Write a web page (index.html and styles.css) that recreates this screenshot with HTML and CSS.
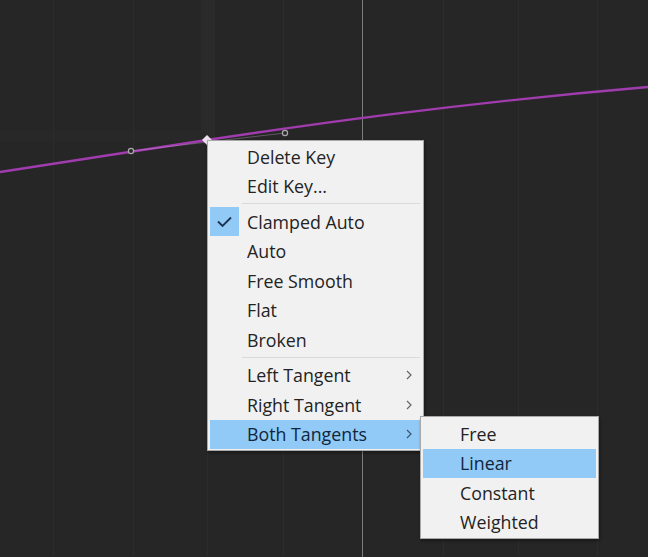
FILE: index.html
```html
<!DOCTYPE html>
<html>
<head>
<meta charset="utf-8">
<link rel="stylesheet" href="styles.css">
</head>
<body>
<div class="canvas">
  <svg class="graph" width="648" height="557" viewBox="0 0 648 557">
    <rect x="201" y="0" width="14" height="140" fill="#2a2a2a"/>
    <rect x="0" y="131" width="207" height="10" fill="#282828"/>
    <g stroke="#2c2c2c" stroke-width="1">
      <line x1="53.5" y1="0" x2="53.5" y2="557"/>
      <line x1="133.5" y1="0" x2="133.5" y2="557"/>
      <line x1="207.5" y1="0" x2="207.5" y2="557"/>
      <line x1="283.5" y1="0" x2="283.5" y2="557"/>
      <line x1="443.5" y1="0" x2="443.5" y2="557"/>
      <line x1="518.5" y1="0" x2="518.5" y2="557"/>
      <line x1="597.5" y1="0" x2="597.5" y2="557"/>
    </g>
    <line x1="362.5" y1="0" x2="362.5" y2="557" stroke="#7c7c7c" stroke-width="1"/>
    <path d="M0 172 L207 140 C 300 126, 450 104, 648 87" fill="none" stroke="#a03cae" stroke-width="2.3"/>
    <line x1="131" y1="151" x2="285" y2="133" stroke="#d0b0d6" stroke-width="1" opacity="0.35"/>
    <circle cx="131" cy="151" r="2.6" fill="#2a2a2a" stroke="#a9a9a9" stroke-width="1.2"/>
    <circle cx="285" cy="133" r="2.6" fill="#2a2a2a" stroke="#a9a9a9" stroke-width="1.2"/>
    <path d="M207 135 L212 140 L207 145 L202 140 Z" fill="#ece0ed"/>
  </svg>

  <div class="menu main-menu">
    <div class="item"><span class="icon"></span><span class="label">Delete Key</span><span class="arrow"></span></div>
    <div class="item"><span class="icon"></span><span class="label">Edit Key...</span><span class="arrow"></span></div>
    <div class="sep"></div>
    <div class="item"><span class="icon checked"><svg width="29" height="29" viewBox="0 0 29 29"><path d="M8 14.5 L12.5 19 L21 10.5" fill="none" stroke="#1b3550" stroke-width="1.9"/></svg></span><span class="label">Clamped Auto</span><span class="arrow"></span></div>
    <div class="item"><span class="icon"></span><span class="label">Auto</span><span class="arrow"></span></div>
    <div class="item"><span class="icon"></span><span class="label">Free Smooth</span><span class="arrow"></span></div>
    <div class="item"><span class="icon"></span><span class="label">Flat</span><span class="arrow"></span></div>
    <div class="item"><span class="icon"></span><span class="label">Broken</span><span class="arrow"></span></div>
    <div class="sep"></div>
    <div class="item"><span class="icon"></span><span class="label">Left Tangent</span><span class="arrow"><svg width="6" height="10" viewBox="0 0 6 10"><path d="M1 1 L5 5 L1 9" fill="none" stroke="#666666" stroke-width="1.2"/></svg></span></div>
    <div class="item"><span class="icon"></span><span class="label">Right Tangent</span><span class="arrow"><svg width="6" height="10" viewBox="0 0 6 10"><path d="M1 1 L5 5 L1 9" fill="none" stroke="#666666" stroke-width="1.2"/></svg></span></div>
    <div class="item active"><span class="icon"></span><span class="label">Both Tangents</span><span class="arrow"><svg width="6" height="10" viewBox="0 0 6 10"><path d="M1 1 L5 5 L1 9" fill="none" stroke="#3a5672" stroke-width="1.2"/></svg></span></div>
  </div>

  <div class="menu sub-menu">
    <div class="item"><span class="icon"></span><span class="label">Free</span></div>
    <div class="item active"><span class="icon"></span><span class="label">Linear</span></div>
    <div class="item"><span class="icon"></span><span class="label">Constant</span></div>
    <div class="item"><span class="icon"></span><span class="label">Weighted</span></div>
  </div>
</div>
</body>
</html>
```

FILE: styles.css
```css
html, body {
  margin: 0;
  padding: 0;
  background: #ffffff;
}

.canvas {
  position: relative;
  width: 648px;
  height: 557px;
  background: #262626;
  overflow: hidden;
  font-family: "Open Sans", "Noto Sans", sans-serif;
}

.graph {
  display: block;
}

.menu {
  position: absolute;
  box-sizing: border-box;
  background: #f1f1f1;
  border: 1px solid #a8a8a8;
  box-shadow: 1px 2px 3px rgba(0, 0, 0, 0.35);
  display: flex;
  flex-direction: column;
}

.main-menu {
  left: 207px;
  top: 140px;
  width: 217px;
  padding: 1px 0 1px;
}

.sub-menu {
  left: 420px;
  top: 416px;
  width: 179px;
  padding: 2px 0 1px;
}

.item {
  height: 29.5px;
  margin: 0 2px;
  display: grid;
  grid-template-columns: 29px 1fr 20px;
  column-gap: 8px;
  align-items: center;
  font-size: 17.8px;
  color: #232323;
  white-space: nowrap;
}

.sub-menu .item {
  grid-template-columns: 29px 1fr;
}

.item.active {
  background: #91c9f7;
  color: #10263a;
}

.icon {
  width: 29px;
  height: 29px;
  display: block;
}

.icon.checked {
  background: #91c9f7;
}

.icon svg {
  display: block;
}

.label {
  line-height: 22px;
}

.arrow {
  display: flex;
  align-items: center;
  justify-content: flex-start;
  padding-left: 5px;
}

.arrow svg {
  display: block;
}

.sep {
  height: 1px;
  margin: 2px 3px 3px 34px;
  background: #dadada;
}
```
